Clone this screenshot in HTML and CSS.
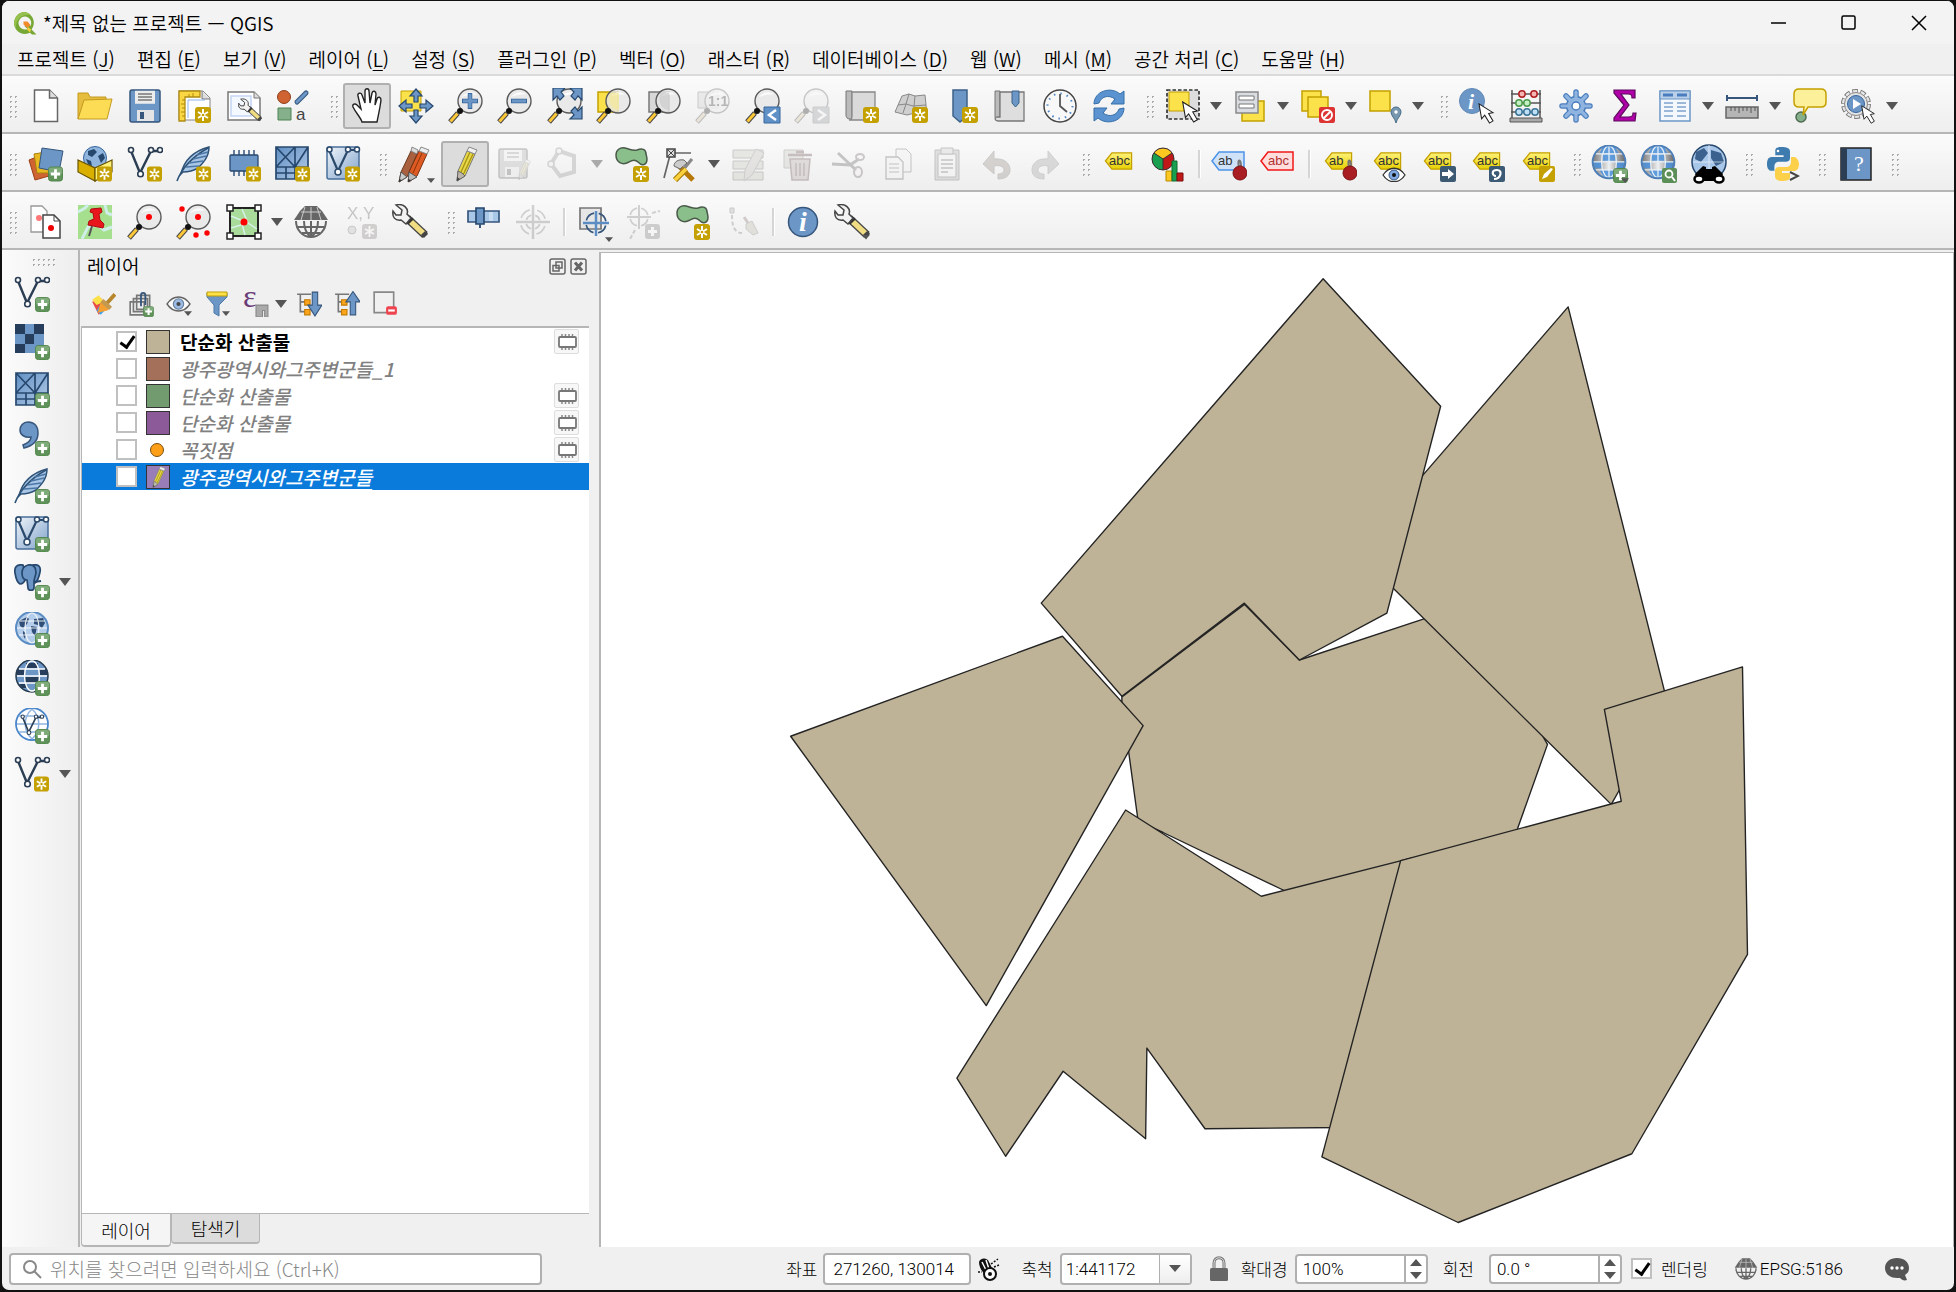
FILE: index.html
```html
<!DOCTYPE html>
<html lang="ko">
<head>
<meta charset="utf-8">
<title>*제목 없는 프로젝트 — QGIS</title>
<link rel="stylesheet" href="styles.css">
</head>
<body>
<svg class="sprite" aria-hidden="true">
<defs>
<linearGradient id="gYel" x1="0" y1="0" x2="0" y2="1"><stop offset="0" stop-color="#fff27a"/><stop offset="1" stop-color="#e6cf00"/></linearGradient>
<linearGradient id="gBlue" x1="0" y1="0" x2="1" y2="1"><stop offset="0" stop-color="#f0f4f9"/><stop offset="1" stop-color="#7fa3cc"/></linearGradient>
<linearGradient id="gMesh" x1="0" y1="0" x2="1" y2="1"><stop offset="0" stop-color="#5f8fc4"/><stop offset="1" stop-color="#b4cbe6"/></linearGradient>
<linearGradient id="gSteel" x1="0" y1="0" x2="1" y2="0"><stop offset="0" stop-color="#777"/><stop offset=".5" stop-color="#eee"/><stop offset="1" stop-color="#666"/></linearGradient>

<symbol id="b-new" viewBox="0 0 16 16"><rect width="16" height="16" rx="3" fill="#c4a000"/><path d="M8 2v12M3 5l10 6M13 5L3 11" stroke="#fff" stroke-width="2"/><circle cx="8" cy="8" r="1.300" fill="#c4a000"/></symbol>
<symbol id="b-add" viewBox="0 0 16 16"><rect x=".5" y=".5" width="15" height="15" rx="3" fill="#5f935a" stroke="#4f8549"/><rect x="1" y="1" width="14" height="7" rx="2" fill="#8db588" opacity=".7"/><path d="M8 3v10M3 8h10" stroke="#fff" stroke-width="3"/></symbol>
<symbol id="mag" viewBox="0 0 36 36"><circle cx="22" cy="13" r="12" fill="#e6e6e6" fill-opacity=".8" stroke="#5a5a5a" stroke-width="1.400"/><path d="M14 9c4-6 12-6 15-2-4-1-10 0-15 2z" fill="#fff" opacity=".8"/><path d="M10 25l-8 9" stroke="#444" stroke-width="5"/><path d="M9.500 25.500l-7 8" stroke="#fcc83a" stroke-width="3"/><circle cx="12" cy="23" r="3" fill="#111"/></symbol>
<symbol id="tri" viewBox="0 0 12 8"><path d="M0 0h12L6 7z" fill="#555"/></symbol>
<symbol id="tag" viewBox="0 0 34 22"><path d="M1 11L9 1h24v20H9z" fill="url(#gYel)" stroke="#c4a000" stroke-width="1.500"/></symbol>
<symbol id="wrench" viewBox="0 0 36 36"><path d="M17 16L33 31" stroke="#444" stroke-width="8"/><path d="M17 16L32 30" stroke="#f0dc82" stroke-width="5.500"/><path d="M31 29l3 3" stroke="#444" stroke-width="6"/><path d="M15 14l4 4" stroke="#333" stroke-width="8"/><path d="M4 1l6 5-1 5-5 0-3-4c-1 6 2 10 8 9l5 4 5-6-4-4C17 5 12-1 4 1z" fill="#f2f2f2" stroke="#444" stroke-width="1.500"/></symbol>
<symbol id="cursor" viewBox="0 0 18 24"><path d="M1 1l3 17 3.500-4L13 23l4-2.500-5-8.500 5-1z" fill="#fff" stroke="#222" stroke-width="1.200"/></symbol>
<symbol id="globe" viewBox="0 0 36 36"><circle cx="18" cy="16" r="15.500" fill="url(#gSteel)"/><g fill="#4a90dc" opacity=".85"><path d="M12 2h12l3 6H9zM3 16h8v6H5zM25 16h8l-2 6h-6zM12 9h12v6H12zM9 24h18l-4 6H13z"/></g><g fill="none" stroke="#e8f0f8" stroke-width="1.200"><ellipse cx="18" cy="16" rx="7" ry="15"/><path d="M3 16h30M5 8.500h26M5 23.500h26M18 1v30"/></g><circle cx="18" cy="16" r="15.500" fill="none" stroke="#4c7fb8" stroke-width="1.800"/></symbol>
<symbol id="vee" viewBox="0 0 36 36"><g fill="none" stroke="#2b3e54" stroke-width="2.400"><path d="M4 5l9 22L24 5h8"/></g><g fill="#fff" stroke="#2b3e54" stroke-width="1.600"><circle cx="4" cy="4" r="2.500"/><circle cx="13.500" cy="28" r="2.800"/><circle cx="24" cy="4" r="2.500"/><circle cx="33" cy="4" r="2.500"/></g></symbol>
<symbol id="feather" viewBox="0 0 36 36"><path d="M5 28C8 14 18 5 33 1c0 10-6 16-11 21-5 3-10 4-15 4z" fill="#a9c6e6" stroke="#2f5378" stroke-width="1.500"/><path d="M1 35C6 22 16 11 32 2" fill="none" stroke="#2f5378" stroke-width="1.600"/><path d="M10 21l13-1M13 17l14-2M17 13l13-3M21 9l11-3" stroke="#4a76a6" stroke-width="1.400"/></symbol>
<symbol id="meshes" viewBox="0 0 36 36"><path d="M1 1h32v32H1z" fill="url(#gMesh)"/><path d="M1 1h32v32H1zM1 21h32M20 1v20M1 21L20 1M1 1l19 20M20 21L33 1M11 21v12M20 21v12M1 27h19" fill="none" stroke="#27486e" stroke-width="1.700"/></symbol>
<symbol id="veebox" viewBox="0 0 36 36"><rect x="2" y="1" width="32" height="32" rx="2" fill="url(#gBlue)" stroke="#4a6f9a" stroke-width="1.500"/><path d="M4 4l9 21L23 4h10" fill="none" stroke="#2b4a6c" stroke-width="2.200"/><g fill="#fff" stroke="#2b4a6c" stroke-width="1.500"><circle cx="4.500" cy="3.500" r="2.500"/><circle cx="13" cy="26" r="3"/><circle cx="23" cy="3.500" r="2.500"/><circle cx="32" cy="3.500" r="2.500"/></g></symbol>
<symbol id="pencil" viewBox="0 0 36 36"><path d="M11 25L20 5l8 3-10 22-8 5z" fill="#e8d84a" stroke="#777" stroke-width="1"/><path d="M14 26L23 6M16.500 28L26 8" stroke="#a89615" stroke-width="1.400"/><path d="M20 5l2-4 8 3-2 4z" fill="#f0f0f0" stroke="#888"/><path d="M11 25l4 2 3 3-8 5z" fill="#bbb5ab" stroke="#666"/><path d="M10 31l3 2-3 2z" fill="#444"/></symbol>
<symbol id="blob" viewBox="0 0 36 36"><path d="M2 9c0-5 4-8 9-7 5 1 7 3 12 2 5-2 9-1 9 4 1 4 2 6 0 9-2 3-5 2-8-1-3-3-6-2-9 0C8 20 2 16 2 9z" fill="#8abf8b" stroke="#4a5a4a" stroke-width="1.500"/></symbol>

<symbol id="i-file" viewBox="0 0 36 36"><path d="M6.500 2h15l8 8v23.500h-23z" fill="#fff" stroke="#666" stroke-width="1.500"/><path d="M21.500 2v8h8" fill="#ddd" stroke="#666" stroke-width="1.500"/></symbol>
<symbol id="i-open" viewBox="0 0 36 36"><path d="M1 31V5h10l2 4h16v4H8z" fill="#e6bd3c" stroke="#c49a20"/><path d="M7 12l28-1-5 20H1z" fill="#fcdc54" stroke="#c49a20"/></symbol>
<symbol id="i-save" viewBox="0 0 36 36"><rect x="3" y="2" width="30" height="32" rx="2" fill="#6b96c6" stroke="#36567c" stroke-width="1.500"/><path d="M8 2.700h20v13H8z" fill="#ececec"/><path d="M11 6h14M11 9h14M11 12h14" stroke="#777" stroke-width="1.500"/><path d="M10 22h17v11H10z" fill="#e4e4e4"/><path d="M13 24h4v7h-4z" fill="#36567c"/></symbol>
<symbol id="i-layout" viewBox="0 0 36 36"><path d="M3 3h24l7 7v22H3z" fill="#fff" stroke="#888"/><path d="M26 3v8h8" fill="#ddd" stroke="#777"/><path d="M3 3h21v6H9v24H3z" fill="#fbd744" stroke="#b08c10" stroke-width="1.300"/><path d="M9 12H6M9 16H5M9 20H6M9 24H5M9 28H6M13 9V6M17 9V5" stroke="#b08c10"/><path d="M12 30V12h17" fill="none" stroke="#8fb4ea"/><use href="#b-new" x="19" y="19" width="16" height="16"/></symbol>
<symbol id="i-manage" viewBox="0 0 36 36"><path d="M2 4h26l6 6v22H2z" fill="#fff" stroke="#777" stroke-width="1.500"/><path d="M28 4v6h6" fill="#ddd" stroke="#777"/><path d="M5 8h20v20H5z" fill="#f4f8ff" stroke="#c3d5f5" stroke-width="1.500"/><use href="#wrench" x="12" y="10" width="24" height="25"/></symbol>
<symbol id="i-style" viewBox="0 0 36 36"><circle cx="9" cy="9" r="6.500" fill="#cf6332" stroke="#8e3f1a"/><path d="M22 14l9-9" stroke="#36567c" stroke-width="5" stroke-linecap="round"/><path d="M22 14l9-9" stroke="#6b96c6" stroke-width="3" stroke-linecap="round"/><path d="M3 20h13v12H3z" fill="#86b08b" stroke="#4d8353"/><text x="21" y="32" font-size="17" fill="#444" class="glyph">a</text></symbol>
<symbol id="i-hand" viewBox="0 0 36 36"><path d="M13 34c-1-4-6-9-9-15-1-3 2-4 4-2l4 4L9 8c-1-3 3-4 4-1l3 8V3c0-3 4-3 4 0l1 12 2-10c1-3 4-2 4 1l-1 11 2-6c1-3 4-2 4 1-1 8-2 12-4 22z" fill="#fff" stroke="#222" stroke-width="1.400"/></symbol>
<symbol id="i-pan" viewBox="0 0 36 36"><path d="M3 3h20v20H3z" fill="#fbe14a" stroke="#c4a000"/><g fill="#6b96c6" stroke="#27486e" stroke-width="1.200"><path id="ar" d="M18 1l6 7h-4v6h-4V8h-4z"/><use href="#ar" transform="rotate(90 18 18)"/><use href="#ar" transform="rotate(180 18 18)"/><use href="#ar" transform="rotate(270 18 18)"/></g></symbol>
<symbol id="i-zin" viewBox="0 0 36 36"><use href="#mag"/><path d="M22 5v16M14 13h16" stroke="#36669c" stroke-width="4.500"/><path d="M22 6v14M15 13h14" stroke="#6b96c6" stroke-width="3"/></symbol>
<symbol id="i-zout" viewBox="0 0 36 36"><use href="#mag"/><path d="M14 13h16" stroke="#36669c" stroke-width="4.500"/><path d="M15 13h14" stroke="#6b96c6" stroke-width="3"/></symbol>
<symbol id="i-zfull" viewBox="0 0 36 36"><use href="#mag"/><g fill="#6b96c6" stroke="#27486e" stroke-width="1.200"><path d="M6 0h12l-4 4 3 4-4 4-3-4-4 4zM35 0H23l4 4-3 4 4 4 3-4 4 4zM35 31H23l4-4-3-4 4-4 3 4 4-4z"/></g></symbol>
<symbol id="i-zsel" viewBox="0 0 36 36"><path d="M2 4h20v20H2z" fill="#fbe14a" stroke="#c4a000" stroke-width="1.500"/><use href="#mag"/><path d="M15 5h8v17c-8 0-12-10-8-17z" fill="#f3e9a0" opacity=".8"/></symbol>
<symbol id="i-zlay" viewBox="0 0 36 36"><path d="M3 4h20v20H3z" fill="#d8d8d8" stroke="#777" stroke-width="1.500"/><use href="#mag"/><path d="M15 5h8v17c-8 0-12-10-8-17z" fill="#ccc" opacity=".7"/></symbol>
<symbol id="i-znat" viewBox="0 0 36 36"><path d="M3 4h20v16H3z" fill="#ccc" stroke="#666"/><use href="#mag"/><text x="13" y="18" font-size="14" font-weight="700" fill="#222" class="glyph">1:1</text></symbol>
<symbol id="i-zlast" viewBox="0 0 36 36"><use href="#mag"/><path d="M19 19h16v16H19z" fill="#5f90c6" stroke="#36669c"/><path d="M31 22l-7 5 7 5" fill="none" stroke="#fff" stroke-width="2.500"/></symbol>
<symbol id="i-znext" viewBox="0 0 36 36"><use href="#mag"/><path d="M19 19h16v16H19z" fill="#8899a8" stroke="#777"/><path d="M24 22l7 5-7 5" fill="none" stroke="#fff" stroke-width="2.500"/></symbol>
<symbol id="i-map" viewBox="0 0 36 36"><path d="M2 3h6v28H6c-3 0-4-2-4-4z" fill="#bbb" stroke="#777"/><path d="M8 4h23v28H5c3 0 3-2 3-4z" fill="#dadada" stroke="#888" stroke-width="1.300"/><use href="#b-new" x="19" y="19" width="16" height="16"/></symbol>
<symbol id="i-3d" viewBox="0 0 36 36"><path d="M9 8l7-2 6 2 10-1 2 20-12-2-8 2-12-3z" fill="#cfcfcf" stroke="#888"/><path d="M5 17l8-1 7 2 13-1M16 6l-3 10-3 9M22 8l-1 10 2 9" fill="none" stroke="#888"/><use href="#b-new" x="19" y="19" width="16" height="16"/></symbol>
<symbol id="i-bm" viewBox="0 0 36 36"><path d="M10 2h14v26l-7 6-7-6z" fill="#6b96c6" stroke="#3d6289" stroke-width="1.500"/><use href="#b-new" x="19" y="19" width="16" height="16"/></symbol>
<symbol id="i-bms" viewBox="0 0 36 36"><path d="M3 3h5v26c0 2-5 3-5 0z" fill="#bbb" stroke="#777"/><path d="M8 4h24v29H6c-3 0-4-3-1-4h3z" fill="#dedede" stroke="#777" stroke-width="1.300"/><path d="M20 3h7v12l-3.500 4-3.500-4z" fill="#6b96c6" stroke="#3d6289"/></symbol>
<symbol id="i-clock" viewBox="0 0 36 36"><circle cx="18" cy="18" r="16" fill="#f8f8f8" stroke="#444" stroke-width="1.500"/><circle cx="18" cy="18" r="12.500" fill="none" stroke="#4d86c6" stroke-width="2" stroke-dasharray="1.500 5.040"/><path d="M18 6v12l7 6" fill="none" stroke="#555" stroke-width="1.800"/></symbol>
<symbol id="i-refresh" viewBox="0 0 36 36"><path d="M3 16C3 3 20-2 29 6l4-3v13H20l4-5C17 6 10 9 8 15z" fill="#5b93d0" stroke="#346ea8" stroke-width="1"/><path d="M33 20c0 13-17 18-26 10l-4 3V20h13l-4 5c7 5 14 2 16-4z" fill="#5b93d0" stroke="#346ea8" stroke-width="1"/></symbol>
<symbol id="i-select" viewBox="0 0 36 36"><path d="M2 2h32v29H2z" fill="#ddd" stroke="#333" stroke-width="1.700" stroke-dasharray="3.500 2"/><path d="M4 4h20v19H4z" fill="#fbe14a" stroke="#c4a000"/><use href="#cursor" x="15" y="13" width="20" height="22"/></symbol>
<symbol id="i-form" viewBox="0 0 36 36"><path d="M10 13h22v20H10z" fill="#fbe14a" stroke="#c4a000" stroke-width="1.500"/><path d="M4 4h22v21H4z" fill="#d9dde2" stroke="#888" stroke-width="1.500"/><path d="M7 8h15v4H7zM7 16h15v4H7z" fill="#fff" stroke="#777"/></symbol>
<symbol id="i-desel" viewBox="0 0 36 36"><path d="M2 3h19v20H2z" fill="#fbe14a" stroke="#c4a000" stroke-width="1.500"/><path d="M8 9h20v20H8z" fill="#fbe14a" stroke="#c4a000" stroke-width="1.500"/><rect x="19" y="19" width="16" height="16" rx="2" fill="#dd3333"/><circle cx="27" cy="27" r="5" fill="none" stroke="#fff" stroke-width="2"/><path d="M23.500 30.500l7-7" stroke="#fff" stroke-width="2"/></symbol>
<symbol id="i-loc" viewBox="0 0 36 36"><path d="M3 3h20v20H3z" fill="#fbe14a" stroke="#c4a000" stroke-width="1.500"/><path d="M29 35c-1-5-5-7-5-11a5 5 0 0 1 10 0c0 4-4 6-5 11z" fill="#7898b0" stroke="#486e88"/><circle cx="29" cy="24" r="1.700" fill="#fff"/></symbol>
<symbol id="i-ident" viewBox="0 0 36 36"><circle cx="13" cy="13" r="12.500" fill="#6b96c6" stroke="#5f88b6"/><text x="9" y="21" font-size="22" font-style="italic" font-weight="700" fill="#fff" class="serif">i</text><use href="#cursor" x="17" y="15" width="20" height="21"/></symbol>
<symbol id="i-abacus" viewBox="0 0 36 36"><path d="M4 2v28M32 2v28M3 6h30M3 15h30M3 24h30" stroke="#555" stroke-width="1.500"/><path d="M2 30h32v4H2z" fill="#aaa" stroke="#555"/><g stroke-width="1.500"><g fill="#f6b5b5" stroke="#b02020"><circle cx="14" cy="6" r="3.200"/><circle cx="26" cy="6" r="3.200"/></g><g fill="#c5f0c5" stroke="#4c9a4c"><circle cx="11" cy="15" r="3.200"/><circle cx="19" cy="15" r="3.200"/></g><g fill="#bfe0f5" stroke="#3d7598"><circle cx="11" cy="24" r="3.200"/><circle cx="19" cy="24" r="3.200"/><circle cx="27" cy="24" r="3.200"/></g></g></symbol>
<symbol id="i-gear" viewBox="0 0 36 36"><g stroke="#4a7dbd" stroke-width="5.500" stroke-linecap="round"><path d="M18 4v28M4 18h28M8 8l20 20M28 8L8 28"/></g><circle cx="18" cy="18" r="9.500" fill="#8fb4e0" stroke="#4a7dbd" stroke-width="1.500"/><g stroke="#8fb4e0" stroke-width="3.200" stroke-linecap="round"><path d="M18 4v28M4 18h28M8 8l20 20M28 8L8 28"/></g><circle cx="18" cy="18" r="4" fill="#fff" stroke="#4a7dbd" stroke-width="1.500"/></symbol>
<symbol id="i-sigma" viewBox="0 0 36 36"><path d="M7 2h21v8h-3c0-3-1-4-4-4h-7l8 11-9 12h8c4 0 5-1 5-4h3l-1 8H7v-3l10-13L7 5z" fill="#b000a8" stroke="#5c0a5c" stroke-width="1.200"/></symbol>
<symbol id="i-table" viewBox="0 0 36 36"><path d="M3 3h30v30H3z" fill="#f4f8fc" stroke="#6b96c6" stroke-width="1.500"/><path d="M3 3h30v8H3z" fill="#b9d0e8" stroke="#6b96c6"/><path d="M6 7h10M20 7h10" stroke="#4a7dbd" stroke-width="3"/><path d="M7 15h9M20 15h9M7 19h9M20 19h9M7 23h9M20 23h9M7 28h9M20 28h9" stroke="#7fa3cc" stroke-width="1.500"/></symbol>
<symbol id="i-ruler" viewBox="0 0 36 36"><path d="M3 10h30M3 7v6M33 7v6" stroke="#36567c" stroke-width="2"/><path d="M2 19h32v11H2z" fill="#b5b5b5" stroke="#666" stroke-width="1.500"/><path d="M7 19v4M11 19v4M15 19v6M19 19v4M23 19v4M27 19v6M31 19v4" stroke="#555"/></symbol>
<symbol id="i-tip" viewBox="0 0 36 36"><circle cx="9" cy="29" r="5" fill="#86b08b" stroke="#4d6a50" stroke-width="1.500"/><path d="M7 1h22c3 0 5 2 5 5v8c0 3-2 5-5 5H16l-5 8 1-8H7c-3 0-5-2-5-5V6c0-3 2-5 5-5z" fill="#fdf09a" stroke="#c4a000" stroke-width="1.500"/></symbol>
<symbol id="i-play" viewBox="0 0 36 36"><circle cx="15" cy="16" r="12.500" fill="none" stroke="#777" stroke-width="5" stroke-dasharray="5.400 2.450"/><circle cx="15" cy="16" r="12.500" fill="none" stroke="#e8e8e8" stroke-width="3" stroke-dasharray="4 3.850" stroke-dashoffset="-.7"/><circle cx="15" cy="16" r="11.500" fill="#e4e4e4" stroke="#888"/><circle cx="15" cy="16" r="8.500" fill="#6b96c6" stroke="#36669c"/><path d="M12 11l8 5-8 5z" fill="#fff"/><use href="#cursor" x="19" y="17" width="16" height="19"/></symbol>

<symbol id="i-dsrc" viewBox="0 0 36 36"><path d="M1 14l15-6 5 22-14 4z" fill="#cf6332" stroke="#9a4016"/><path d="M6 8l18-3v22H9z" fill="#e8b820" stroke="#a88010"/><path d="M14 2l21 3-4 21-20-4z" fill="#6b96c6" stroke="#36567c"/><use href="#b-add" x="20" y="20" width="15" height="16"/></symbol>
<symbol id="i-gpkg" viewBox="0 0 36 36"><circle cx="18" cy="12" r="11.500" fill="#8fb5de" stroke="#36669c"/><path d="M11 5l6-2 3 3-5 5-4-2zM21 10l5-3 2 5-4 5zM9 13l5 2 1 5-4-2z" fill="#27486e"/><path d="M1 14l17 8v13L1 26z" fill="#d9b000" stroke="#6a5500" stroke-width="1.200"/><path d="M35 14l-17 8v13l17-9z" fill="#fff27a" stroke="#6a5500" stroke-width="1.200"/><use href="#b-new" x="20" y="20" width="15" height="16"/></symbol>
<symbol id="i-vnew" viewBox="0 0 36 36"><use href="#vee"/><use href="#b-new" x="20" y="20" width="15" height="16"/></symbol>
<symbol id="i-vadd" viewBox="0 0 36 36"><use href="#vee"/><use href="#b-add" x="21" y="21" width="15" height="15"/></symbol>
<symbol id="i-fnew" viewBox="0 0 36 36"><use href="#feather"/><use href="#b-new" x="20" y="20" width="15" height="16"/></symbol>
<symbol id="i-fadd" viewBox="0 0 36 36"><use href="#feather"/><use href="#b-add" x="21" y="21" width="15" height="15"/></symbol>
<symbol id="i-mem" viewBox="0 0 36 36"><path d="M8 4v26M13 4v26M18 4v26M23 4v26M28 4v26" stroke="#36567c" stroke-width="1.500"/><rect x="4" y="9" width="28" height="16" rx="1" fill="#6b96c6" stroke="#27486e" stroke-width="1.300"/><use href="#b-new" x="20" y="20" width="15" height="16"/></symbol>
<symbol id="i-mnew" viewBox="0 0 36 36"><use href="#meshes"/><use href="#b-new" x="20" y="20" width="15" height="16"/></symbol>
<symbol id="i-madd" viewBox="0 0 36 36"><use href="#meshes" x="1"/><use href="#b-add" x="21" y="21" width="15" height="15"/></symbol>
<symbol id="i-bnew" viewBox="0 0 36 36"><use href="#veebox"/><use href="#b-new" x="20" y="20" width="15" height="16"/></symbol>
<symbol id="i-badd" viewBox="0 0 36 36"><use href="#veebox"/><use href="#b-add" x="21" y="21" width="15" height="15"/></symbol>
<symbol id="i-edits" viewBox="0 0 40 40"><g transform="translate(1 2)"><path d="M4 26L14 5l6 3-10 23-8 5z" fill="#a8603f" stroke="#6a3a20"/><path d="M14 5l1-4 6 3-1 4z" fill="#ddd" stroke="#888"/><path d="M4 26l6 5-8 5z" fill="#ccc" stroke="#555"/><path d="M12 26L22 5l8 3-10 22-8 6z" fill="#dd5a22" stroke="#7a3010"/><path d="M16 27L25 7" stroke="#8a3408"/><path d="M22 5l2-4 8 3-2 4z" fill="#eee" stroke="#888"/><path d="M12 26l8 5-9 5z" fill="#bbb" stroke="#555"/><path d="M2 33l3 1-3 2zM11 33l3 1-3 2z" fill="#333"/></g><use href="#tri" x="31" y="34" width="8" height="6"/></symbol>
<symbol id="i-saveed" viewBox="0 0 36 36"><rect x="2" y="3" width="28" height="29" rx="2" fill="#aaa" stroke="#555" stroke-width="1.500"/><path d="M7 4h18v11H7z" fill="#eee"/><path d="M10 7h12M10 11h12" stroke="#777" stroke-width="1.500"/><path d="M8 21h14v10H8z" fill="#e4e4e4"/><path d="M10 23h4v6h-4z" fill="#555"/><use href="#pencil" x="16" y="11" width="21" height="25"/></symbol>
<symbol id="i-poly" viewBox="0 0 36 36"><path d="M13 5l15 5v16l-14 4L5 18z" fill="none" stroke="#889088" stroke-width="4"/><g fill="#eee" stroke="#888" stroke-width="1.500"><circle cx="13" cy="5" r="3"/><circle cx="5" cy="18" r="3"/></g></symbol>
<symbol id="i-blob" viewBox="0 0 36 36"><use href="#blob"/><use href="#b-new" x="19" y="20" width="16" height="16"/></symbol>
<symbol id="i-node" viewBox="0 0 36 36"><path d="M9 7h19M7 9L1 32" stroke="#666" stroke-width="1.700"/><path d="M4 3h8v8H4z" fill="#ddd" stroke="#444" stroke-width="1.500"/><path d="M5 4l6 6M11 4l-6 6" stroke="#444"/><path d="M17 21L30 34" stroke="#b87808" stroke-width="5"/><path d="M29 13L20 24" stroke="#888" stroke-width="3"/><path d="M12 34L23 23" stroke="#a88010" stroke-width="6"/><path d="M12 34L23 23" stroke="#fcd23c" stroke-width="3.500"/><path d="M11 20c0-4 4-7 10-6l3 3-7 6z" fill="#ccc" stroke="#666"/></symbol>
<symbol id="i-attr" viewBox="0 0 36 36"><path d="M2 4h30v8H2zM2 15h30v8H2zM2 26h30v8H2z" fill="#c5c3a0" stroke="#666"/><path d="M14 24L25 3l8 4-12 22-8 6z" fill="#c8b8a8" stroke="#777"/></symbol>
<symbol id="i-trash" viewBox="0 0 36 36"><path d="M4 4h19v18H4z" fill="#c8c4a8" stroke="#777"/><path d="M8 9h24M16 6h8" stroke="#8a3434" stroke-width="2.500"/><path d="M10 13h20l-2 21H12z" fill="#d09a9a" stroke="#8a3434" stroke-width="1.500"/><path d="M16 17v13M20 17v13M24 17v13" stroke="#8a3434" stroke-width="1.500"/></symbol>
<symbol id="i-cut" viewBox="0 0 36 36"><path d="M8 7l18 17M2 18l18 1 9-6" fill="none" stroke="#555" stroke-width="3"/><g fill="none" stroke="#7a5a5a" stroke-width="2"><ellipse cx="30" cy="11" rx="4" ry="3"/><ellipse cx="28" cy="26" rx="4" ry="5"/></g></symbol>
<symbol id="i-copy" viewBox="0 0 36 36"><path d="M17 3h10l5 5v18H17z" fill="#f2f2f2" stroke="#555"/><path d="M7 11h12l5 5v17H7z" fill="#f2f2f2" stroke="#555" stroke-width="1.300"/><path d="M10 18h10M10 22h10M10 26h10" stroke="#555"/></symbol>
<symbol id="i-paste" viewBox="0 0 36 36"><path d="M6 4h24v30H6z" fill="#aaa" stroke="#555"/><path d="M9 8h18v23H9z" fill="#f2f2f2" stroke="#555"/><path d="M12 2h12v6H12z" fill="#ccc" stroke="#555"/><path d="M12 14h12M12 18h12M12 22h12M12 26h7" stroke="#555" stroke-width="1.300"/></symbol>
<symbol id="i-undo" viewBox="0 0 36 36"><path d="M5 18L16 5v8c10-1 16 4 16 11 0 6-5 9-12 9v-5c4 0 6-2 6-4 0-4-5-5-10-4v8z" fill="#9a8168" stroke="#7a644e"/></symbol>
<symbol id="i-redo" viewBox="0 0 36 36"><path d="M31 18L20 5v8C10 12 4 17 4 24c0 6 5 9 12 9v-5c-4 0-6-2-6-4 0-4 5-5 10-4v8z" fill="#8e9e8e" stroke="#6c7c6c"/></symbol>
<symbol id="i-label" viewBox="0 0 36 36"><use href="#tag" x="1" y="6" width="33" height="18"/><text x="8" y="19" font-size="13" fill="#333" class="glyph">abc</text></symbol>
<symbol id="i-chart" viewBox="0 0 36 36"><circle cx="13" cy="13" r="11" fill="#c01818"/><path d="M13 13v11A11 11 0 0 1 4 7z" fill="#18a050"/><path d="M13 13L4 7a11 11 0 0 1 18 0z" fill="#fcc820"/><path d="M13 24V13L4 7M13 13l9-6" fill="none" stroke="#333"/><circle cx="13" cy="13" r="11" fill="none" stroke="#333"/><path d="M16 25h6v10h-6z" fill="#fcc820" stroke="#b88a00"/><path d="M22 15h5v20h-5z" fill="#18a050" stroke="#0c6a30"/><path d="M27 27h6v8h-6z" fill="#c01818" stroke="#7a0c0c"/></symbol>
<symbol id="i-lpinb" viewBox="0 0 36 36"><path d="M1 15L8 6h25v18H8z" fill="#cfe2f8" stroke="#4d94e8" stroke-width="1.500"/><text x="7" y="19" font-size="13" fill="#333" class="glyph">ab</text><path d="M28 21c-2-8 2-9 2-1" fill="none" stroke="#777" stroke-width="2"/><circle cx="29" cy="27" r="7" fill="#a81e22" stroke="#7a1014"/></symbol>
<symbol id="i-lred" viewBox="0 0 36 36"><path d="M1 15L8 6h25v18H8z" fill="#fdd" stroke="#f01818" stroke-width="1.500"/><text x="8" y="19" font-size="13" fill="#b03030" class="glyph">abc</text></symbol>
<symbol id="i-lpin" viewBox="0 0 36 36"><use href="#tag" x="1" y="6" width="33" height="18"/><text x="8" y="19" font-size="13" fill="#333" class="glyph">ab</text><path d="M28 21c-2-8 2-9 2-1" fill="none" stroke="#777" stroke-width="2"/><circle cx="29" cy="27" r="7" fill="#a81e22" stroke="#7a1014"/></symbol>
<symbol id="eye" viewBox="0 0 24 16"><path d="M1 8c6-9 16-9 22 0-6 9-16 9-22 0z" fill="#fff" stroke="#333" stroke-width="1.300"/><circle cx="12" cy="8" r="5" fill="#7fa9e0" stroke="#36567c"/><circle cx="12" cy="8" r="2" fill="#111"/></symbol>
<symbol id="i-leye" viewBox="0 0 36 36"><use href="#i-label"/><use href="#eye" x="12" y="21" width="24" height="16"/></symbol>
<symbol id="i-lmove" viewBox="0 0 36 36"><use href="#i-label"/><rect x="20" y="20" width="16" height="16" rx="2" fill="#3d5a74"/><path d="M22 26h6v-3l6 5-6 5v-3h-6z" fill="#fff"/></symbol>
<symbol id="i-lrot" viewBox="0 0 36 36"><use href="#i-label"/><rect x="20" y="20" width="16" height="16" rx="2" fill="#3d5a74"/><path d="M25 33c7 0 9-9 3-9-6 0-5 6-1 6" fill="none" stroke="#fff" stroke-width="2.200"/></symbol>
<symbol id="i-ledit" viewBox="0 0 36 36"><use href="#i-label"/><rect x="20" y="20" width="16" height="16" rx="2" fill="#c4a000"/><path d="M23 33l2-5 7-6 2 1-6 8z" fill="#fff"/></symbol>
<symbol id="i-gadd" viewBox="0 0 40 40"><use href="#globe" x="0" y="1" width="38" height="38"/><use href="#b-add" x="23" y="24" width="15" height="15"/><use href="#tri" x="31" y="34" width="8" height="6"/></symbol>
<symbol id="i-gfind" viewBox="0 0 40 40"><use href="#globe" x="0" y="1" width="38" height="38"/><rect x="23" y="24" width="15" height="15" rx="2" fill="#5c8f57"/><circle cx="30" cy="30" r="3.500" fill="none" stroke="#fff" stroke-width="1.800"/><path d="M33 33l3 4" stroke="#fff" stroke-width="2"/></symbol>
<symbol id="i-bino" viewBox="0 0 40 40"><circle cx="20" cy="18" r="17" fill="#a8c6e8" stroke="#27486e" stroke-width="1.500"/><path d="M7 8l8-4 4 5-7 9-6-3zM22 6l10 3 3 9-8 4-5-8z" fill="#3b618e"/><path d="M4 18h32M20 1v34" stroke="#fff" opacity=".6"/><path d="M6 30l8-8 3 1v2h6v-2l3-1 8 8-3 7H9z" fill="#000"/><g fill="#fff" stroke="#000" stroke-width="2.500"><ellipse cx="10" cy="35" rx="4.500" ry="3.500"/><ellipse cx="30" cy="35" rx="4.500" ry="3.500"/></g></symbol>
<symbol id="i-py" viewBox="0 0 36 36"><path d="M16 1c-7 0-7 3-7 4v5h9v2H5c-4 0-5 4-5 8s2 7 5 7h3v-5c0-3 2-5 5-5h8c3 0 4-2 4-4V6c0-4-4-5-9-5z" fill="#3e7cb0" transform="translate(3 0) scale(.92)"/><path d="M18 34c7 0 7-3 7-4v-4h-8v-2h12c4 0 5-4 5-7s-2-7-5-7h-3v5c0 3-2 5-5 5h-7c-3 0-4 2-4 4v5c0 4 3 5 8 5z" fill="#fdd04a" transform="translate(1 1)"/><circle cx="14" cy="5" r="1.300" fill="#fff"/><path d="M26 26l8 4-8 4" fill="none" stroke="#444" stroke-width="2"/></symbol>
<symbol id="i-help" viewBox="0 0 36 36"><path d="M4 2h30v32H4z" fill="#6b96c6" stroke="#222" stroke-width="1.500"/><path d="M4 2h6v32H4z" fill="#2b3e54"/><text x="17" y="25" font-size="22" fill="#fff" class="serif">?</text></symbol>

<symbol id="i-cc" viewBox="0 0 36 36"><path d="M3 2h11l5 5v21H3z" fill="#fff" stroke="#999" stroke-width="1.300"/><circle cx="11" cy="14" r="3" fill="#f77"/><path d="M15 11h11l6 6v17H15z" fill="#fff" stroke="#444" stroke-width="1.500"/><path d="M26 11v6h6" fill="none" stroke="#444"/><circle cx="23" cy="24" r="3" fill="#e00"/></symbol>
<symbol id="i-pin" viewBox="0 0 36 36"><path d="M1 1h34v34H1z" fill="#a6e08f"/><path d="M1 8l7-4 3-3M5 35l6-12 10-2 6 5 8-3M28 1l2 8 5 2" fill="none" stroke="#cfeee8" stroke-width="3"/><path d="M15 22l-3 10" stroke="#555" stroke-width="2"/><path d="M14 5l10-1 1 4-3 2 1 6 4 4-1 4-15-3 1-4 5-2-1-6-3-1z" fill="#e8161c" stroke="#b00a10"/></symbol>
<symbol id="i-zpt" viewBox="0 0 36 36"><use href="#mag"/><circle cx="22" cy="13" r="3" fill="#f00"/></symbol>
<symbol id="i-zpts" viewBox="0 0 36 36"><use href="#mag"/><g fill="#f00"><circle cx="22" cy="13" r="3"/><circle cx="6" cy="5" r="2.700"/><circle cx="20" cy="31" r="2.700"/><circle cx="31" cy="29" r="2.700"/></g></symbol>
<symbol id="i-ext" viewBox="0 0 36 36"><path d="M4 4h28v28H4z" fill="#a9dc9a" stroke="#222" stroke-width="2"/><path d="M5 12l10 4 4 15M16 5l6 14 9 6M5 24l10-3" fill="none" stroke="#d7f0e8" stroke-width="1.500"/><g fill="#fff" stroke="#222" stroke-width="1.500"><path d="M1 1h6v6H1zM29 1h6v6h-6zM1 29h6v6H1zM29 29h6v6h-6z"/></g><circle cx="18" cy="18" r="3.500" fill="#f00"/></symbol>
<symbol id="i-dome" viewBox="0 0 36 36"><path d="M12 2h12l5 5 6 9H1l6-9z" fill="#666"/><path d="M8 8h20M12 3l-4 13M24 3l4 13M18 3v13" stroke="#ccc" stroke-width="1"/><path d="M3 17a15 16 0 0 0 30 0M18 17v17M11 17c0 8 3 13 7 16M25 17c0 8-3 13-7 16M5 23h26M9 29h18" fill="none" stroke="#666" stroke-width="2"/></symbol>
<symbol id="i-xy" viewBox="0 0 36 36"><text x="4" y="15" font-size="17" fill="#555" class="glyph">X,Y</text><circle cx="9" cy="26" r="4" fill="#bbb" stroke="#666"/><rect x="19" y="20" width="15" height="15" rx="3" fill="#888070"/><path d="M26.500 22v11M22 25l9 5M31 25l-9 5" stroke="#fff" stroke-width="1.800"/></symbol>
<symbol id="i-sync" viewBox="0 0 36 36"><path d="M2 7h10v11H2zM16 7h17v11H16z" fill="#a9c8e8" stroke="#36567c" stroke-width="1.700"/><path d="M23 8h4v9h-4z" fill="#c8dcf2"/><path d="M10 4h8v16h-8z" fill="#6b96c6" stroke="#27486e" stroke-width="1.700"/><path d="M14 20v4" stroke="#36567c" stroke-width="2"/></symbol>
<symbol id="i-cross" viewBox="0 0 36 36"><g fill="none" stroke="#777" stroke-width="1.700"><circle cx="18" cy="18" r="12.500" stroke-dasharray="12 7.600" stroke-dashoffset="-4"/><circle cx="18" cy="18" r="7" stroke-dasharray="7 4" stroke-dashoffset="-2"/></g><path d="M18 1v34M1 18h34" stroke="#777" stroke-width="2.500"/></symbol>
<symbol id="i-dig" viewBox="0 0 40 40"><path d="M6 6h21v21H6z" fill="#e6e6e6" stroke="#777" stroke-width="1.700"/><circle cx="22" cy="21" r="10" fill="none" stroke="#36567c" stroke-width="1.700" stroke-dasharray="11 4.700" stroke-dashoffset="-2.500"/><path d="M22 9v25M9 21h26" stroke="#5b8cc4" stroke-width="2.500"/><use href="#tri" x="31" y="35" width="8" height="6"/></symbol>
<symbol id="i-dig2" viewBox="0 0 36 36"><circle cx="14" cy="13" r="9" fill="none" stroke="#777" stroke-width="1.700" stroke-dasharray="10 4.100" stroke-dashoffset="-2"/><path d="M14 1v24M2 13h24" stroke="#777" stroke-width="2"/><path d="M27 9l8-2M10 26L5 35" stroke="#777" stroke-width="2" stroke-dasharray="4 2"/><rect x="20" y="20" width="15" height="15" rx="3" fill="#777"/><path d="M27.500 23v9M23 27.500h9" stroke="#fff" stroke-width="3"/></symbol>
<symbol id="i-clean" viewBox="0 0 36 36"><path d="M6 4h4v5H6z" fill="#aaa" stroke="#666"/><path d="M8 11c0 10 2 18 10 18" fill="none" stroke="#777" stroke-width="2" stroke-dasharray="4 2.500"/><path d="M20 13l4 6" stroke="#a66" stroke-width="3"/><path d="M22 20l6-3 6 12-5 2-7-6z" fill="#c8b478" stroke="#777"/></symbol>
<symbol id="i-info" viewBox="0 0 36 36"><circle cx="18" cy="18" r="14.500" fill="#6b96c6" stroke="#36567c" stroke-width="1.500"/><text x="14" y="27" font-size="28" font-style="italic" font-weight="700" fill="#fff" class="serif">i</text></symbol>
<symbol id="i-wrench2" viewBox="0 0 36 36"><use href="#wrench"/><use href="#tri" x="28" y="31" width="8" height="5"/></symbol>

<symbol id="i-raster" viewBox="0 0 36 36"><path d="M1 0h29v29H1z" fill="#6b96c6"/><path d="M1 0h10v10H1zM20 0h10v10H20zM11 10h9v10h-9zM1 20h10v9H1z" fill="#263e5c"/><use href="#b-add" x="21" y="21" width="15" height="15"/></symbol>
<symbol id="i-comma" viewBox="0 0 36 36"><path d="M14 2c6 0 10 4 10 11 0 8-6 13-14 15l-1-3c5-2 8-5 8-8-6 1-11-2-11-7 0-4 3-8 8-8z" fill="#6b96c6" stroke="#36567c" stroke-width="1.500"/><use href="#b-add" x="21" y="21" width="15" height="15"/></symbol>
<symbol id="i-eleph" viewBox="0 0 36 36"><g fill="#6b96c6" stroke="#27486e" stroke-width="1.700"><path d="M9 1C3 0 0 3 1 9c1 6 3 10 5 11 3 0 5-3 6-6zM19 1c6-1 8 2 7 7-1 5-2 9-5 11-2 0-3-2-4-5z"/><path d="M14 1c5-1 8 2 8 7 0 4-2 6-2 10v6c0 3-6 3-6 0l-1-8c-3 0-5-2-5-7 0-4 2-7 6-8z"/></g><path d="M20 18l7-1" stroke="#27486e" stroke-width="2"/><use href="#b-add" x="21" y="21" width="15" height="15"/></symbol>
<symbol id="i-wms" viewBox="0 0 36 36"><circle cx="18" cy="16" r="16" fill="#b4cdea" stroke="#5a8cc4" stroke-width="2"/><path d="M5 9l8-4 2 2-2 5-4 4-3-2zM20 7l9-1 2 5-3 5-4-3-4-1zM17 14l6 1-2 9-3-4zM9 19l3 2-1 6-2-4z" fill="#2f4f78"/><g fill="none" stroke="#fff" stroke-width="1.200" opacity=".85"><ellipse cx="18" cy="16" rx="7" ry="15"/><path d="M3 16h30M5 9h26M5 23h26"/></g><use href="#b-add" x="21" y="21" width="15" height="15"/></symbol>
<symbol id="i-wcs" viewBox="0 0 36 36"><circle cx="18" cy="16" r="16" fill="#6b96c6" stroke="#26384c" stroke-width="1.500"/><path d="M12 3h12v5H12zM3 9h8v6H3zM25 9h8v6h-8zM11 17h14v6H11zM5 24h7v4H8zM24 24h7l-4 4h-3z" fill="#263e5c"/><g fill="none" stroke="#fff" stroke-width="1.400"><ellipse cx="18" cy="16" rx="7.500" ry="15"/><path d="M3 16h30M5 9h26M5 23h26"/></g><use href="#b-add" x="21" y="21" width="15" height="15"/></symbol>
<symbol id="i-wfs" viewBox="0 0 36 36"><circle cx="18" cy="16" r="16" fill="#fff" stroke="#4a86cc" stroke-width="1.800"/><path d="M18 1c-9 8-9 22 0 30M18 1c9 8 9 22 0 30M3 16h30M5 8h26M5 24h26" fill="none" stroke="#8fb4e0" stroke-width="1.500"/><use href="#vee" x="5" y="6" width="26" height="24"/><use href="#b-add" x="21" y="21" width="15" height="15"/></symbol>

<symbol id="p-style" viewBox="0 0 24 24"><path d="M2 10l9-3 3 10-6 5z" fill="#e84a4a"/><path d="M2 8l6-4 5 6-7 3z" fill="#fce04a"/><path d="M6 18l6-9 5 5-7 8z" fill="#4aa0e8"/><path d="M10 10l3-2 6 7-3 3-9 2z" fill="#f5a030"/><path d="M15 12l8-9" stroke="#b8862c" stroke-width="3.500"/><path d="M11 9l8 7" stroke="#c49a50" stroke-width="4"/></symbol>
<symbol id="p-group" viewBox="0 0 24 24"><g fill="#eee" stroke="#777" stroke-width="1.500"><path d="M2 10h13v12H2zM5 7h13v12H5zM8 4h12v13H8z"/></g><path d="M12 14V4c0-3 4-3 4 0v9" fill="none" stroke="#36567c" stroke-width="1.700"/><use href="#b-add" x="14" y="14" width="10" height="10"/></symbol>
<symbol id="p-eye" viewBox="0 0 26 26"><g opacity=".75"><use href="#eye" x="0" y="4" width="25" height="18"/></g><use href="#tri" x="18" y="20" width="8" height="6"/></symbol>
<symbol id="p-filter" viewBox="0 0 26 26"><path d="M3 2h20v4l-8 8v11l-5-3v-8L3 6z" fill="#6b96c6" stroke="#4c78a8"/><path d="M3 1h20v4H3z" fill="#fbe14a" stroke="#c4a000"/><use href="#tri" x="18" y="20" width="8" height="6"/></symbol>
<symbol id="p-eps" viewBox="0 0 24 24"><text x="0" y="15" font-size="30" fill="#6a3d78" class="serif">ε</text><path d="M12 13h11v11h-3v-6h-2v6h-6z" fill="#aaa" stroke="#888"/></symbol>
<symbol id="p-exp" viewBox="0 0 24 24"><path d="M1 3h13M4 3v16h6M4 10h6" fill="none" stroke="#777" stroke-width="1.500"/><path d="M8 8h5v5H8zM8 17h5v5H8z" fill="#fba51c" stroke="#c47a00"/><path d="M15 1h5v12h4l-6.500 10L11 13h4z" fill="#6b96c6" stroke="#36567c"/></symbol>
<symbol id="p-col" viewBox="0 0 24 24"><path d="M1 3h13M4 3v16h6M4 10h6" fill="none" stroke="#777" stroke-width="1.500"/><path d="M7 8h5v5H7zM7 17h5v5H7z" fill="#fba51c" stroke="#c47a00"/><path d="M15 22h5V10h4l-6.500-9.500L11 10h4z" fill="#6b96c6" stroke="#36567c"/></symbol>
<symbol id="p-rem" viewBox="0 0 24 24"><path d="M2 1h18v19H2z" fill="#f0f0f0" stroke="#888" stroke-width="1.500"/><rect x="13" y="14" width="10" height="8" rx="2" fill="#ee4450"/><path d="M15 18h6" stroke="#fff" stroke-width="2"/></symbol>
<symbol id="chip" viewBox="0 0 22 22"><path d="M6 3v16M9.500 3v16M13 3v16M16.500 3v16" stroke="#888" stroke-width="1.500"/><rect x="3" y="6" width="17" height="10" rx="1" fill="#fff" stroke="#777" stroke-width="1.800"/></symbol>
</defs>
</svg>

<div class="window">
  <header class="titlebar">
    <svg class="logo" viewBox="0 0 24 24"><path d="M12 1a11 11 0 1 0 5 20.800l2 1.700h4.500l-5-5A11 11 0 0 0 12 1zm0 4.500a6.500 6.500 0 0 1 5.500 9.500l-3-3-3 3 3 3A6.500 6.500 0 1 1 12 5.500z" fill="#77a835"/><path d="M12 1a11 11 0 0 0-9 17c-1-10 6-15 15-14a11 11 0 0 0-6-3z" fill="#97c14e"/><path d="M10.500 10.500h4l3 3.500-3 3-4-3.500z" fill="#f08a2c"/><path d="M15 16l3 2.500-1 3-3-3z" fill="#f4d03c"/></svg>
    <h1>*제목 없는 프로젝트 — QGIS</h1>
    <div class="winbtns">
      <button aria-label="최소화"><svg viewBox="0 0 16 16"><path d="M0 8h15"/></svg></button>
      <button aria-label="최대화"><svg viewBox="0 0 16 16"><rect x="1" y="1" width="13" height="13" rx="1.500"/></svg></button>
      <button aria-label="닫기"><svg viewBox="0 0 16 16"><path d="M1 1l14 14M15 1L1 15"/></svg></button>
    </div>
  </header>

  <nav class="menubar">
    <button>프로젝트 (<u>J</u>)</button><button>편집 (<u>E</u>)</button><button>보기 (<u>V</u>)</button><button>레이어 (<u>L</u>)</button><button>설정 (<u>S</u>)</button><button>플러그인 (<u>P</u>)</button><button>벡터 (<u>O</u>)</button><button>래스터 (<u>R</u>)</button><button>데이터베이스 (<u>D</u>)</button><button>웹 (<u>W</u>)</button><button>메시 (<u>M</u>)</button><button>공간 처리 (<u>C</u>)</button><button>도움말 (<u>H</u>)</button>
  </nav>

  <div class="toolbar">
    <div class="group"><i class="grip"></i>
      <button aria-label="새 프로젝트"><svg><use href="#i-file"/></svg></button>
      <button aria-label="열기"><svg><use href="#i-open"/></svg></button>
      <button aria-label="저장"><svg><use href="#i-save"/></svg></button>
      <button aria-label="새 조판"><svg><use href="#i-layout"/></svg></button>
      <button aria-label="조판 관리자"><svg><use href="#i-manage"/></svg></button>
      <button aria-label="스타일 관리자"><svg><use href="#i-style"/></svg></button>
    </div>
    <div class="group"><i class="grip"></i>
      <button class="on" aria-label="이동"><svg><use href="#i-hand"/></svg></button>
      <button aria-label="선택 집합으로 이동"><svg><use href="#i-pan"/></svg></button>
      <button aria-label="확대"><svg><use href="#i-zin"/></svg></button>
      <button aria-label="축소"><svg><use href="#i-zout"/></svg></button>
      <button aria-label="전체 보기"><svg><use href="#i-zfull"/></svg></button>
      <button aria-label="선택 확대"><svg><use href="#i-zsel"/></svg></button>
      <button aria-label="레이어 확대"><svg><use href="#i-zlay"/></svg></button>
      <button disabled aria-label="원본 해상도"><svg><use href="#i-znat"/></svg></button>
      <button aria-label="이전 보기"><svg><use href="#i-zlast"/></svg></button>
      <button disabled aria-label="다음 보기"><svg><use href="#i-znext"/></svg></button>
      <button aria-label="새 맵 뷰"><svg><use href="#i-map"/></svg></button>
      <button aria-label="새 3차원 맵 뷰"><svg><use href="#i-3d"/></svg></button>
      <button aria-label="새 북마크"><svg><use href="#i-bm"/></svg></button>
      <button aria-label="북마크"><svg><use href="#i-bms"/></svg></button>
      <button aria-label="시간 제어기"><svg><use href="#i-clock"/></svg></button>
      <button aria-label="새로고침"><svg><use href="#i-refresh"/></svg></button>
    </div>
    <div class="group"><i class="grip"></i>
      <button class="drop" aria-label="객체 선택"><svg><use href="#i-select"/></svg></button>
      <button class="drop" aria-label="값으로 선택"><svg><use href="#i-form"/></svg></button>
      <button class="drop" aria-label="선택 해제"><svg><use href="#i-desel"/></svg></button>
      <button class="drop" aria-label="위치로 선택"><svg><use href="#i-loc"/></svg></button>
    </div>
    <div class="group"><i class="grip"></i>
      <button aria-label="객체 식별"><svg><use href="#i-ident"/></svg></button>
      <button aria-label="필드 계산기"><svg><use href="#i-abacus"/></svg></button>
      <button aria-label="공간 처리 툴박스"><svg><use href="#i-gear"/></svg></button>
      <button aria-label="통계 요약"><svg><use href="#i-sigma"/></svg></button>
      <button class="drop" aria-label="속성 테이블"><svg><use href="#i-table"/></svg></button>
      <button class="drop" aria-label="측정"><svg><use href="#i-ruler"/></svg></button>
      <button aria-label="맵 도움말"><svg><use href="#i-tip"/></svg></button>
      <button class="drop" aria-label="액션 실행"><svg><use href="#i-play"/></svg></button>
    </div>
  </div>

  <div class="toolbar">
    <div class="group"><i class="grip"></i>
      <button aria-label="데이터소스 관리자"><svg><use href="#i-dsrc"/></svg></button>
      <button aria-label="새 지오패키지"><svg><use href="#i-gpkg"/></svg></button>
      <button aria-label="새 셰이프파일"><svg><use href="#i-vnew"/></svg></button>
      <button aria-label="새 SpatiaLite"><svg><use href="#i-fnew"/></svg></button>
      <button aria-label="새 임시 레이어"><svg><use href="#i-mem"/></svg></button>
      <button aria-label="새 메시"><svg><use href="#i-mnew"/></svg></button>
      <button aria-label="새 가상 레이어"><svg><use href="#i-bnew"/></svg></button>
    </div>
    <div class="group"><i class="grip"></i>
      <button aria-label="현재 편집"><svg class="big"><use href="#i-edits"/></svg></button>
      <button class="on" aria-label="편집 모드"><svg><use href="#pencil"/></svg></button>
      <button disabled aria-label="편집 저장"><svg><use href="#i-saveed"/></svg></button>
      <button class="drop" disabled aria-label="도형 추가"><svg><use href="#i-poly"/></svg></button>
      <button aria-label="폴리곤 추가"><svg><use href="#i-blob"/></svg></button>
      <button class="drop" aria-label="꼭짓점 도구"><svg><use href="#i-node"/></svg></button>
      <button disabled aria-label="속성 수정"><svg><use href="#i-attr"/></svg></button>
      <button disabled aria-label="삭제"><svg><use href="#i-trash"/></svg></button>
      <button disabled aria-label="잘라내기"><svg><use href="#i-cut"/></svg></button>
      <button disabled aria-label="복사"><svg><use href="#i-copy"/></svg></button>
      <button disabled aria-label="붙여넣기"><svg><use href="#i-paste"/></svg></button>
      <button disabled aria-label="실행 취소"><svg><use href="#i-undo"/></svg></button>
      <button disabled aria-label="다시 실행"><svg><use href="#i-redo"/></svg></button>
    </div>
    <div class="group"><i class="grip"></i>
      <button aria-label="라벨"><svg><use href="#i-label"/></svg></button>
      <button aria-label="다이어그램"><svg><use href="#i-chart"/></svg></button><i class="sep"></i>
      <button aria-label="고정 라벨 강조"><svg><use href="#i-lpinb"/></svg></button>
      <button aria-label="미배치 라벨"><svg><use href="#i-lred"/></svg></button><i class="sep"></i>
      <button aria-label="라벨 고정"><svg><use href="#i-lpin"/></svg></button>
      <button aria-label="라벨 표시"><svg><use href="#i-leye"/></svg></button>
      <button aria-label="라벨 이동"><svg><use href="#i-lmove"/></svg></button>
      <button aria-label="라벨 회전"><svg><use href="#i-lrot"/></svg></button>
      <button aria-label="라벨 변경"><svg><use href="#i-ledit"/></svg></button>
    </div>
    <div class="group"><i class="grip"></i>
      <button aria-label="레이어 서비스 추가"><svg class="big"><use href="#i-gadd"/></svg></button>
      <button aria-label="서비스 검색"><svg class="big"><use href="#i-gfind"/></svg></button>
      <button aria-label="메타서치"><svg class="big"><use href="#i-bino"/></svg></button>
    </div>
    <div class="group"><i class="grip"></i><button aria-label="파이썬 콘솔"><svg><use href="#i-py"/></svg></button></div>
    <div class="group"><i class="grip"></i><button aria-label="도움말"><svg><use href="#i-help"/></svg></button></div>
    <div class="group"><i class="grip"></i></div>
  </div>

  <div class="toolbar">
    <div class="group"><i class="grip"></i>
      <button aria-label="좌표 복사"><svg><use href="#i-cc"/></svg></button>
      <button aria-label="외부 지도"><svg><use href="#i-pin"/></svg></button>
      <button aria-label="좌표로 확대"><svg><use href="#i-zpt"/></svg></button>
      <button aria-label="다중 좌표 확대"><svg><use href="#i-zpts"/></svg></button>
      <button class="drop" aria-label="범위"><svg><use href="#i-ext"/></svg></button>
      <button aria-label="좌표 변환"><svg><use href="#i-dome"/></svg></button>
      <button disabled aria-label="필드 변환"><svg><use href="#i-xy"/></svg></button>
      <button aria-label="설정"><svg><use href="#wrench"/></svg></button>
    </div>
    <div class="group"><i class="grip"></i>
      <button aria-label="지오레퍼런스"><svg><use href="#i-sync"/></svg></button>
      <button disabled aria-label="십자선"><svg><use href="#i-cross"/></svg></button><i class="sep"></i>
      <button aria-label="고급 디지타이징"><svg class="big"><use href="#i-dig"/></svg></button>
      <button disabled aria-label="점 추가"><svg><use href="#i-dig2"/></svg></button>
      <button aria-label="도형 추가"><svg><use href="#i-blob"/></svg></button>
      <button disabled aria-label="지우기"><svg><use href="#i-clean"/></svg></button><i class="sep"></i>
      <button aria-label="정보"><svg><use href="#i-info"/></svg></button>
      <button aria-label="옵션"><svg><use href="#i-wrench2"/></svg></button>
    </div>
  </div>

  <main class="work">
    <aside class="sidebar">
      <i class="grip-h"></i>
      <button aria-label="벡터 추가"><svg><use href="#i-vadd"/></svg></button>
      <button aria-label="래스터 추가"><svg><use href="#i-raster"/></svg></button>
      <button aria-label="메시 추가"><svg><use href="#i-madd"/></svg></button>
      <button aria-label="CSV 추가"><svg><use href="#i-comma"/></svg></button>
      <button aria-label="SpatiaLite 추가"><svg><use href="#i-fadd"/></svg></button>
      <button aria-label="가상 레이어 추가"><svg><use href="#i-badd"/></svg></button>
      <button class="drop" aria-label="PostGIS 추가"><svg><use href="#i-eleph"/></svg></button>
      <button aria-label="WMS 추가"><svg><use href="#i-wms"/></svg></button>
      <button aria-label="WCS 추가"><svg><use href="#i-wcs"/></svg></button>
      <button aria-label="WFS 추가"><svg><use href="#i-wfs"/></svg></button>
      <button class="drop" aria-label="새 레이어"><svg><use href="#i-vnew"/></svg></button>
    </aside>

    <section class="panel">
      <div class="panel-head"><h2>레이어</h2>
        <button aria-label="분리"><svg viewBox="0 0 17 17"><rect x="1" y="1" width="15" height="15" rx="2"/><path d="M7 4h6v6H7zM4 7.500h6v5.500H4z"/></svg></button>
        <button aria-label="닫기"><svg viewBox="0 0 17 17"><rect x="1" y="1" width="15" height="15" rx="2"/><path d="M5 4.500l7 8M12 4.500l-7 8" class="bold"/></svg></button>
      </div>
      <div class="panel-tools">
        <button aria-label="스타일"><svg><use href="#p-style"/></svg></button>
        <button aria-label="그룹 추가"><svg><use href="#p-group"/></svg></button>
        <button aria-label="가시성"><svg><use href="#p-eye"/></svg></button>
        <button aria-label="필터"><svg><use href="#p-filter"/></svg></button>
        <button class="drop" aria-label="표현식 필터"><svg><use href="#p-eps"/></svg></button>
        <button aria-label="모두 펼치기"><svg><use href="#p-exp"/></svg></button>
        <button aria-label="모두 접기"><svg><use href="#p-col"/></svg></button>
        <button aria-label="제거"><svg><use href="#p-rem"/></svg></button>
      </div>
      <ul class="tree">
        <li class="visible"><input type="checkbox" id="l1" checked><span class="swatch tan"></span><label for="l1">단순화 산출물</label><span class="chip"><svg><use href="#chip"/></svg></span></li>
        <li><input type="checkbox" id="l2"><span class="swatch rust"></span><label for="l2">광주광역시와그주변군들_1</label></li>
        <li><input type="checkbox" id="l3"><span class="swatch green"></span><label for="l3">단순화 산출물</label><span class="chip"><svg><use href="#chip"/></svg></span></li>
        <li><input type="checkbox" id="l4"><span class="swatch purple"></span><label for="l4">단순화 산출물</label><span class="chip"><svg><use href="#chip"/></svg></span></li>
        <li><input type="checkbox" id="l5"><span class="swatch point"></span><label for="l5">꼭짓점</label><span class="chip"><svg><use href="#chip"/></svg></span></li>
        <li class="selected"><input type="checkbox" id="l6"><span class="swatch lilac"><svg><use href="#pencil"/></svg></span><label for="l6">광주광역시와그주변군들</label></li>
      </ul>
      <div class="tabs"><button class="active">레이어</button><button>탐색기</button></div>
    </section>

    <section class="canvas">
      <svg viewBox="601 253 1352 994" role="img" aria-label="지도">
        <g transform="translate(780 260) scale(.625)" fill="#beb297" stroke="#232323" stroke-width="2.200" stroke-linejoin="round">
          <path d="M743 551L831 640L1028 575L1100 551L1228 775L1180 910L1150 985L820 1015L805 1008L613 916L573 898L558 788L547 706V699z"/>
          <path d="M1261 75L1420 709L1343 848L1330 871L982 526L960 504V425L1028 345z"/>
          <path d="M869 30L1057 234L971 565L831 640L743 549L547 698L418 549z"/>
          <path d="M452 602L581 745L330 1193L17 762z"/>
          <path d="M553 880L770 1018L1010 957L900 1388L680 1390L587 1261L585 1406L453 1298L361 1434L283 1309z"/>
          <path d="M1540 651L1548 1111L1363 1430L1085 1540L867 1435L993 961L1346 866L1319 719z"/>
        </g>
      </svg>
    </section>
  </main>

  <footer class="status">
    <div class="search"><svg viewBox="0 0 20 20"><circle cx="8" cy="8" r="6"/><path d="M12 12l7 7"/></svg><input type="text" placeholder="위치를 찾으려면 입력하세요 (Ctrl+K)" aria-label="위치"></div>
    <div class="fields">
      <label for="xy">좌표</label><input id="xy" class="box coord" type="text" value="271260, 130014">
      <button class="bug" aria-label="범위 전환"><svg viewBox="0 0 24 24"><path d="M2 5c1-4 8-5 10 0l4 8-8 4C4 14 2 9 2 5z" fill="#111"/><path d="M5 5l4 8M9 3l3 9" stroke="#fff" stroke-width="1.500"/><circle cx="13" cy="17" r="6" fill="#fff" stroke="#111" stroke-width="2"/><circle cx="13" cy="17" r="2" fill="#111"/><path d="M14 7l7-5M17 10l5-2M1 15l4 0" stroke="#111" stroke-width="1.500" stroke-dasharray="2 1.500"/></svg></button>
      <label for="scale">축척</label><span class="box combo"><input id="scale" type="text" value="1:441172"><button aria-label="축척 목록"><svg viewBox="0 0 12 8"><use href="#tri"/></svg></button></span>
      <svg class="lock" viewBox="0 0 20 28"><path d="M5 14V8c0-7 10-7 10 0v6" fill="none" stroke="#777" stroke-width="3"/><path d="M5 14V8c0-7 10-7 10 0v6" fill="none" stroke="#ddd" stroke-width="1"/><rect x="1" y="13" width="18" height="13" rx="1.500" fill="#666"/></svg>
      <label for="mag-in">확대경</label><span class="box spin"><input id="mag-in" type="text" value="100%"><span class="steps"><i></i><i></i></span></span>
      <label for="rot">회전</label><span class="box spin rot"><input id="rot" type="text" value="0.0 °"><span class="steps"><i></i><i></i></span></span>
      <span class="render"><input type="checkbox" id="render" checked><label for="render">렌더링</label></span>
      <button class="crs"><svg><use href="#i-dome"/></svg>EPSG:5186</button>
      <button class="msg" aria-label="메시지"><svg viewBox="0 0 24 24"><path d="M12 1C5 1 0 5 0 11s5 10 12 10l3 0c2 2 4 3 7 2l-2-5c3-2 4-4 4-7 0-6-5-10-12-10z" fill="#555"/><g fill="#fff"><circle cx="7" cy="11" r="1.700"/><circle cx="12" cy="11" r="1.700"/><circle cx="17" cy="11" r="1.700"/></g></svg></button>
    </div>
  </footer>
</div>
</body>
</html>
```
FILE: styles.css
```css
* { box-sizing: border-box; }
body { margin: 0; background: #111; color: #000; font-family: "Noto Sans CJK KR", sans-serif; font-size: 19px; }
button { border: 0; padding: 0; margin: 0; background: none; font: inherit; color: inherit; }
input { font: inherit; color: inherit; }
svg { display: block; }
.sprite { position: absolute; width: 0; height: 0; }
.glyph { font-family: "Liberation Sans", sans-serif; }
.serif { font-family: "Liberation Serif", serif; }

.window { height: 100vh; border: 1px solid #111; border-width: 1px 2px 2px 2px; border-radius: 9px; overflow: hidden; background: #f0f0f0; display: flex; flex-direction: column; }

.titlebar { flex: none; height: 43px; background: #f3f3f3; display: flex; align-items: center; padding-left: 11px; gap: 6px; }
.logo { width: 24px; height: 24px; }
.titlebar h1 { margin: 0; font-size: 19px; font-weight: 350; line-height: 28px; }
.winbtns { margin-left: auto; display: flex; }
.winbtns button { width: 70px; height: 43px; display: grid; place-items: center; }
.winbtns svg { width: 16px; height: 16px; fill: none; stroke: #000; stroke-width: 1.5; }

.menubar { flex: none; height: 32px; border-bottom: 2px solid #dadada; display: flex; padding-left: 4px; font-weight: 350; }
.menubar button { padding: 0 11px; line-height: 30px; white-space: nowrap; }
.menubar u { text-underline-offset: 3px; }

.toolbar { flex: none; height: 58px; padding-top: 4px; display: flex; align-items: center; background: linear-gradient(#fbfbfb, #eee); border-bottom: 2px solid #b6b6b6; }
.group { display: flex; align-items: center; }
.group button { width: 48px; height: 46px; margin-right: 1px; display: flex; align-items: center; justify-content: center; border: 2px solid transparent; border-radius: 3px; }
.group button:nth-of-type(even) { margin-right: 2px; }
.group svg { flex: none; width: 36px; height: 36px; }
.group svg.big { width: 40px; height: 40px; }
.group button.on { background: #dcdcdc; border-color: #b0b0b0; }
.group button:disabled svg { opacity: .3; filter: grayscale(.7); }
button.drop::after { content: ""; flex: none; border: 6px solid transparent; border-top: 8px solid #555; border-bottom: 0; margin-left: 9px; }
.group button.drop { width: 66px; padding-left: 4px; justify-content: flex-start; }
.group button.drop:disabled::after { border-top-color: #aaa; }
.grip { flex: none; width: 10px; height: 25px; margin: 0 4px 0 10px; background: radial-gradient(circle, #aaa 1px, transparent 1px) 0 0 / 5px 5px; }
.group:first-child .grip { margin-left: 6px; }
.sep { width: 3px; height: 28px; margin: 0 4px; border-left: 2px solid #d5d5d5; border-right: 1px solid #fff; }

.work { flex: 1; min-height: 0; display: flex; }
.sidebar { flex: none; width: 78px; background: linear-gradient(90deg, #fbfbfb, #eee); border-right: 2px solid #b6b6b6; display: flex; flex-direction: column; align-items: flex-start; padding-left: 12px; }
.grip-h { width: 25px; height: 10px; margin: 7px 0 3px 17px; background: radial-gradient(circle, #aaa 1px, transparent 1px) 0 0 / 5px 5px; }
.sidebar button { height: 48px; display: flex; align-items: center; }
.sidebar svg { width: 36px; height: 36px; }

.panel { flex: none; width: 519px; padding: 0 10px 0 1px; display: flex; flex-direction: column; }
.panel-head { display: flex; align-items: center; height: 32px; padding: 0 2px 0 6px; gap: 4px; }
.panel-head h2 { margin: 0 auto 0 0; font-size: 19px; font-weight: 350; line-height: 28px; }
.panel-head svg { width: 17px; height: 17px; fill: none; stroke: #666; stroke-width: 1.5; }
.panel-head .bold { stroke-width: 3; }
.panel-tools { height: 44px; display: flex; align-items: center; padding-left: 4px; }
.panel-tools button { width: 36px; margin-right: 2px; height: 30px; display: flex; align-items: center; justify-content: center; }
.panel-tools button.drop { width: 52px; padding-left: 6px; justify-content: flex-start; }
.panel-tools button.drop::after { margin-left: 6px; }
.panel-tools svg { width: 26px; height: 26px; flex: none; }
.tree { flex: 1; margin: 0; padding: 0; list-style: none; background: #fff; border-top: 2px solid #b6b6b6; border-left: 1px solid #b6b6b6; }
.tree li { height: 27px; display: flex; align-items: center; padding: 0 10px 0 34px; color: #808080; font-style: italic; font-weight: 500; }
.tree li.visible { color: #000; font-style: normal; font-weight: 700; }
.tree label { margin-right: auto; line-height: 27px; }
.tree li.selected { background: #0b7bdb; color: #fff; }
.tree li.selected label { text-decoration: underline; text-underline-offset: 4px; }
input[type=checkbox] { appearance: none; flex: none; width: 21px; height: 21px; margin: 0; background: #fff; border: 2px solid #c0c0c0; }
input[type=checkbox]:checked::after { content: ""; display: block; width: 6px; height: 12px; margin: 0 0 0 5px; border: solid #000; border-width: 0 3px 3px 0; transform: rotate(35deg); }
.swatch { flex: none; width: 24px; height: 24px; margin: 0 10px 0 9px; border: 1px solid #333; }
.swatch svg { width: 22px; height: 22px; }
.tan { background: #beb297; }
.rust { background: #a5705a; }
.green { background: #729b6f; }
.purple { background: #8d5a99; }
.lilac { background: #987db7; }
.point { width: 14px; height: 14px; margin: 0 16px 0 13px; border-radius: 50%; background: #ff9e17; border-color: #7a5010; }
.chip { width: 25px; height: 25px; display: grid; place-items: center; border: 1px solid #ddd; border-radius: 2px; background: #f7f7f7; }
.chip svg { width: 22px; height: 22px; }

.tabs { height: 34px; display: flex; align-items: flex-start; border-top: 1px solid #b6b6b6; font-weight: 300; font-size: 18px; }
.tabs button { width: 89px; height: 30px; background: #dcdcdc; border: 1px solid #b6b6b6; border-top: 0; border-bottom-width: 2px; border-radius: 0 0 4px 4px; line-height: 26px; }
.tabs .active { width: 90px; height: 33px; background: #f5f5f5; line-height: 30px; }

.canvas { flex: 1; min-width: 0; margin-top: 2px; background: #fff; border: 1px solid #b6b6b6; border-width: 1px 1px 0 2px; }
.canvas svg { width: 100%; height: 100%; }

.status { flex: none; height: 43px; padding: 0 45px 0 7px; display: flex; align-items: center; justify-content: space-between; font-size: 17px; font-weight: 300; }
.search, .box { height: 32px; background: #fff; border: 2px solid #b0b0b0; border-radius: 4px; display: flex; align-items: center; }
.search { width: 533px; padding-left: 11px; gap: 8px; font-size: 19px; }
.search svg { width: 20px; height: 20px; fill: none; stroke: #888; stroke-width: 2; }
.search input, .box input { flex: 1; min-width: 0; border: 0; padding: 0; outline: 0; background: none; font-weight: 300; }
.search input::placeholder { color: #888; opacity: 1; }
.fields { display: flex; align-items: center; font-family: Roboto, "Noto Sans CJK KR", sans-serif; }
.coord { width: 148px; padding: 0 8px; margin-left: 6px; }
.bug { margin: 0 20px 0 6px; }
.bug svg, .msg svg { width: 24px; height: 24px; }
.combo { width: 132px; margin: 0 17px 0 7px; padding-left: 4px; }
.combo button { width: 31px; align-self: stretch; display: grid; place-items: center; border-left: 1px solid #b0b0b0; background: linear-gradient(#fff, #eee); }
.combo svg { width: 12px; height: 8px; }
.lock { width: 20px; height: 28px; margin-right: 12px; }
.spin { width: 133px; height: 30px; margin: 0 15px 0 7px; padding-left: 6px; }
.rot { margin: 0 9px 0 15px; }
.steps { width: 22px; align-self: stretch; border-left: 2px solid #b0b0b0; display: flex; flex-direction: column; align-items: center; justify-content: center; gap: 6px; }
.steps i { border: 6px solid transparent; border-top: 0; border-bottom: 7px solid #555; }
.steps i:last-child { border-top: 7px solid #555; border-bottom: 0; }
.render { display: flex; align-items: center; gap: 9px; }
.crs { display: flex; align-items: center; gap: 2px; margin: 0 42px 0 26px; font-size: 17px; }
.crs svg { width: 24px; height: 24px; }
```
